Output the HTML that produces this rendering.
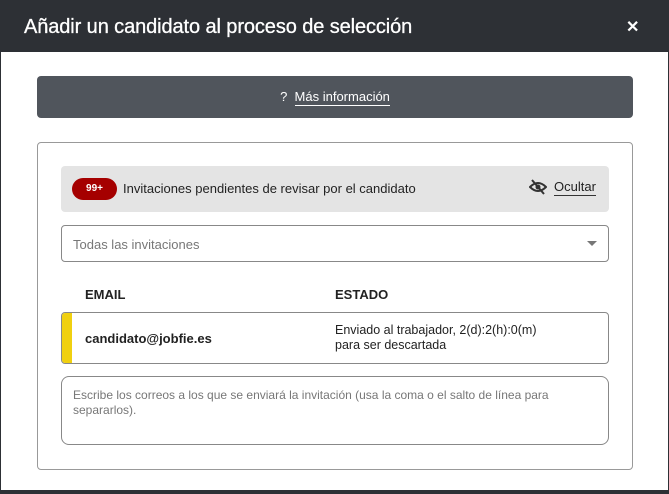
<!DOCTYPE html>
<html><head><meta charset="utf-8"><style>
*{box-sizing:border-box;margin:0;padding:0}
body{width:669px;height:494px;background:#fff;font-family:"Liberation Sans",sans-serif;position:relative;overflow:hidden;color:#222}
.frame{position:absolute;left:0;top:0;width:669px;height:494px;border-left:1px solid #2d3035;border-right:1px solid #2d3035;border-bottom:4px solid #2d3035}
.hdr{position:absolute;left:0;top:0;width:669px;height:52px;background:#2d3035;color:#fff}
.hdr .t{position:absolute;left:24px;top:16px;font-size:20px;letter-spacing:-0.1px;-webkit-text-stroke:0.3px #fff}
.hdr .x{position:absolute;left:626px;top:17px;font-size:16px;font-weight:bold}
.info{position:absolute;left:37px;top:76px;width:596px;height:42px;background:#50555c;border-radius:4px;color:#fff;font-size:13px;text-align:center;line-height:42px}
.info u{text-decoration:none;border-bottom:1px solid #fff;padding-bottom:1px}
.card{position:absolute;left:37px;top:142px;width:596px;height:328px;border:1px solid #999;border-radius:4px}
.ban{position:absolute;left:61px;top:166px;width:548px;height:46px;background:#e4e4e4;border-radius:4px;font-size:13px}
.badge{position:absolute;left:11px;top:12px;width:45px;height:22px;border-radius:11px;background:#a50000;color:#fff;font-size:10px;font-weight:bold;text-align:center;line-height:22px}
.ban .tx{position:absolute;left:62px;top:15px}
.ban .oc{position:absolute;left:493px;top:13px;border-bottom:1px solid #333;line-height:16px}
.ban svg{position:absolute;left:468px;top:13px}
.sel{position:absolute;left:61px;top:225px;width:548px;height:37px;border:1px solid #888;border-radius:4px;font-size:13px;color:#777;padding:11px 0 0 11px}
.sel .ar{position:absolute;right:11px;top:15px;width:0;height:0;border-left:5px solid transparent;border-right:5px solid transparent;border-top:5px solid #777}
.th{position:absolute;top:287px;font-size:13px;font-weight:bold}
.row{position:absolute;left:61px;top:312px;width:548px;height:52px;border:1px solid #888;border-radius:4px;overflow:hidden}
.row .y{position:absolute;left:0;top:0;width:10px;height:100%;background:#f0d010}
.row .e{position:absolute;left:23px;top:18px;font-size:13px;font-weight:bold}
.row .s{position:absolute;left:273px;top:10px;font-size:12.5px;line-height:15px}
.ta{position:absolute;left:61px;top:376px;width:548px;height:69px;border:1px solid #888;border-radius:8px;font-size:12px;color:#777;padding:11px 11px;line-height:15px}
</style></head><body>
<div class="hdr"><div class="t">Añadir un candidato al proceso de selección</div><div class="x">✕</div></div>
<div class="frame"></div>
<div class="info">?&nbsp;&nbsp;<u>Más información</u></div>
<div class="card"></div>
<div class="ban"><div class="badge">99+</div><div class="tx">Invitaciones pendientes de revisar por el candidato</div>
<svg width="18" height="16" viewBox="0 0 18 16"><path d="M1 8 Q9 0 17 8 Q9 16 1 8Z" fill="none" stroke="#333" stroke-width="2"/><circle cx="9" cy="8" r="2.5" fill="#333"/><path d="M3 1 L15 15" stroke="#333" stroke-width="2"/></svg>
<div class="oc">Ocultar</div></div>
<div class="sel">Todas las invitaciones<div class="ar"></div></div>
<div class="th" style="left:85px">EMAIL</div>
<div class="th" style="left:335px">ESTADO</div>
<div class="row"><div class="y"></div><div class="e">candidato@jobfie.es</div><div class="s">Enviado al trabajador, 2(d):2(h):0(m)<br>para ser descartada</div></div>
<div class="ta">Escribe los correos a los que se enviará la invitación (usa la coma o el salto de línea para separarlos).</div>
</body></html>
